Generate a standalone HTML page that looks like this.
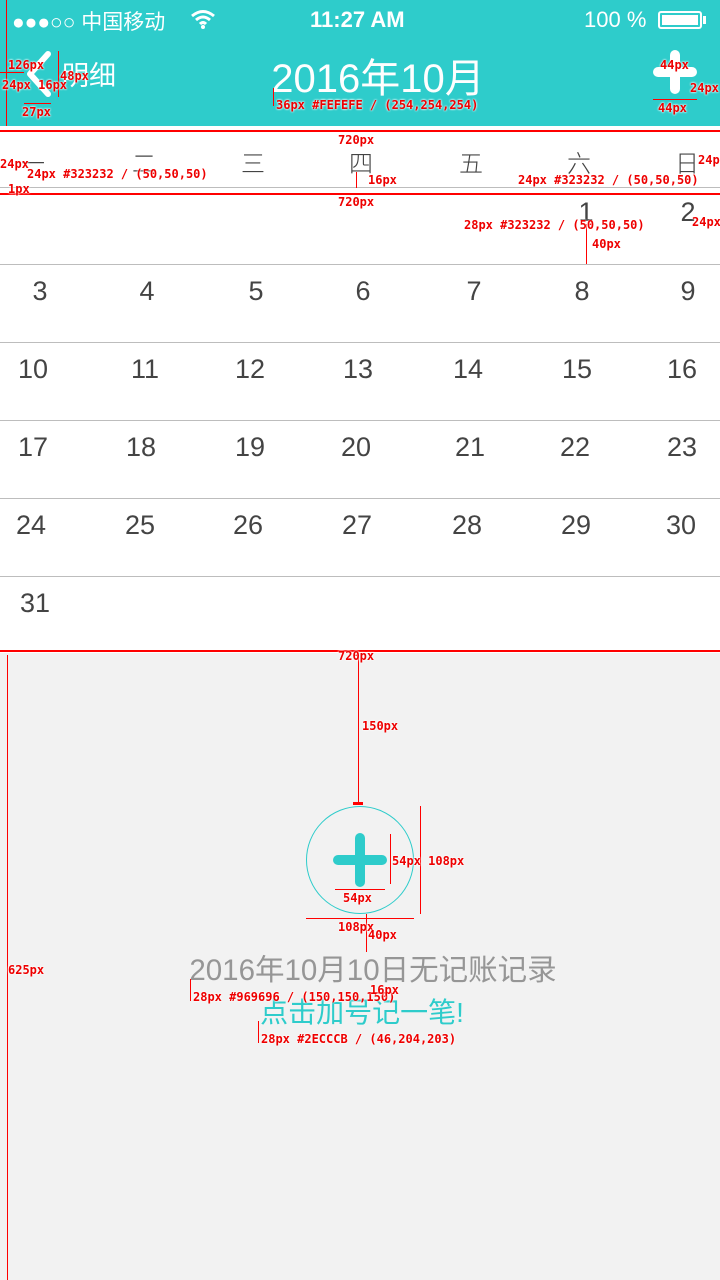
<!DOCTYPE html>
<html><head><meta charset="utf-8"><style>
*{margin:0;padding:0;box-sizing:border-box}
body{width:720px;height:1280px;position:relative;overflow:hidden;background:#fff;font-family:"Liberation Sans","Noto Sans CJK SC",sans-serif}
.a{position:absolute}
.hdr{left:0;top:0;width:720px;height:126px;background:#2ECCCB}
.wk{font-size:24px;color:#444;top:144px;width:40px;text-align:center;margin-left:-20px;font-weight:300}
.n{font-size:27px;color:#444;width:60px;text-align:center;margin-left:-30px}
.hl{height:1px;background:#bdbdbd;left:0;width:720px}
.r{background:#f00}
.t{color:#e00;font-family:"DejaVu Sans Mono","Liberation Mono",monospace;font-weight:bold;font-size:12px;white-space:nowrap;text-shadow:0 0 2px #fff,0 0 2px #fff}
</style></head><body>
<div class="a hdr"></div>
<div class="a" style="left:12px;top:6px;color:#fff;font-size:21px">●●●○○ 中国移动</div>
<svg class="a" style="left:190px;top:9px" width="26" height="20" viewBox="0 0 26 20"><path d="M2 7 Q13 -2 24 7 M6 11 Q13 5 20 11 M10 15 Q13 12 16 15" stroke="#fff" stroke-width="3" fill="none"/><circle cx="13" cy="18" r="2" fill="#fff"/></svg>
<div class="a" style="left:310px;top:7px;color:#fff;font-size:22px;font-weight:bold">11:27 AM</div>
<div class="a" style="left:584px;top:7px;color:#fff;font-size:22px">100 %</div>
<div class="a" style="left:658px;top:11px;width:44px;height:18px;border:2px solid #fff;border-radius:3px;padding:2px"><div style="background:#fff;width:100%;height:100%"></div></div>
<div class="a" style="left:703px;top:16px;width:3px;height:8px;background:#fff"></div>
<svg class="a" style="left:24px;top:50px" width="30" height="50"><path d="M24 4 L6 24 L24 44" stroke="#fff" stroke-width="6" fill="none" stroke-linecap="round" stroke-linejoin="round"/></svg>
<div class="a" style="left:62px;top:54px;color:#fff;font-size:27px">明细</div>
<div class="a" style="left:0;width:756px;top:46px;text-align:center;color:#FEFEFE;font-size:40px">2016年10月</div>
<div class="a" style="left:670px;top:50px;width:10px;height:44px;background:#fff;border-radius:5px"></div>
<div class="a" style="left:653px;top:67px;width:44px;height:10px;background:#fff;border-radius:5px"></div>

<div class="a wk" style="left:33px">一</div><div class="a wk" style="left:144px">二</div><div class="a wk" style="left:253px">三</div><div class="a wk" style="left:361px">四</div><div class="a wk" style="left:471px">五</div><div class="a wk" style="left:579px">六</div><div class="a wk" style="left:687px">日</div>
<div class="a hl" style="top:187px"></div>
<div class="a hl" style="top:264px"></div><div class="a hl" style="top:342px"></div><div class="a hl" style="top:420px"></div><div class="a hl" style="top:498px"></div><div class="a hl" style="top:576px"></div>

<div class="a n" style="left:586px;top:197px">1</div><div class="a n" style="left:688px;top:197px">2</div>
<div class="a n" style="left:40px;top:276px">3</div><div class="a n" style="left:147px;top:276px">4</div><div class="a n" style="left:256px;top:276px">5</div><div class="a n" style="left:363px;top:276px">6</div><div class="a n" style="left:474px;top:276px">7</div><div class="a n" style="left:582px;top:276px">8</div><div class="a n" style="left:688px;top:276px">9</div>
<div class="a n" style="left:33px;top:354px">10</div><div class="a n" style="left:145px;top:354px">11</div><div class="a n" style="left:250px;top:354px">12</div><div class="a n" style="left:358px;top:354px">13</div><div class="a n" style="left:468px;top:354px">14</div><div class="a n" style="left:577px;top:354px">15</div><div class="a n" style="left:682px;top:354px">16</div>
<div class="a n" style="left:33px;top:432px">17</div><div class="a n" style="left:141px;top:432px">18</div><div class="a n" style="left:250px;top:432px">19</div><div class="a n" style="left:356px;top:432px">20</div><div class="a n" style="left:470px;top:432px">21</div><div class="a n" style="left:575px;top:432px">22</div><div class="a n" style="left:682px;top:432px">23</div>
<div class="a n" style="left:31px;top:510px">24</div><div class="a n" style="left:140px;top:510px">25</div><div class="a n" style="left:248px;top:510px">26</div><div class="a n" style="left:357px;top:510px">27</div><div class="a n" style="left:467px;top:510px">28</div><div class="a n" style="left:576px;top:510px">29</div><div class="a n" style="left:681px;top:510px">30</div>
<div class="a n" style="left:35px;top:588px">31</div>

<div class="a" style="left:0;top:653px;width:720px;height:627px;background:#f2f2f2"></div>
<div class="a" style="left:306px;top:806px;width:108px;height:108px;border:1px solid #2ECCCB;border-radius:50%"></div>
<div class="a" style="left:355px;top:833px;width:10px;height:54px;background:#2ECCCB;border-radius:5px"></div>
<div class="a" style="left:333px;top:855px;width:54px;height:10px;background:#2ECCCB;border-radius:5px"></div>
<div class="a" style="left:0;width:746px;top:947px;text-align:center;color:#969696;font-size:29.5px">2016年10月10日无记账记录</div>
<div class="a" style="left:0;width:724px;top:991px;text-align:center;color:#2ECCCB;font-size:28px">点击加号记一笔!</div>

<!-- annotations -->
<div class="a r" style="left:0;top:130px;width:720px;height:2px"></div>
<div class="a r" style="left:0;top:193px;width:720px;height:2px"></div>
<div class="a r" style="left:0;top:650px;width:720px;height:2px"></div>
<div class="a r" style="left:6px;top:0;width:1px;height:126px"></div>
<div class="a r" style="left:7px;top:655px;width:1px;height:625px"></div>
<div class="a r" style="left:358px;top:655px;width:1px;height:150px"></div>
<div class="a r" style="left:353px;top:802px;width:10px;height:3px"></div>
<div class="a r" style="left:420px;top:806px;width:1px;height:108px"></div>
<div class="a r" style="left:306px;top:918px;width:108px;height:1px"></div>
<div class="a r" style="left:366px;top:914px;width:1px;height:38px"></div>
<div class="a r" style="left:390px;top:834px;width:1px;height:50px"></div>
<div class="a r" style="left:335px;top:889px;width:50px;height:1px"></div>
<div class="a r" style="left:586px;top:224px;width:1px;height:40px"></div>
<div class="a r" style="left:356px;top:172px;width:1px;height:16px"></div>
<div class="a r" style="left:273px;top:88px;width:1px;height:18px"></div>
<div class="a r" style="left:190px;top:979px;width:1px;height:22px"></div>
<div class="a r" style="left:258px;top:1021px;width:1px;height:22px"></div>
<div class="a r" style="left:653px;top:99px;width:44px;height:1px"></div>
<div class="a r" style="left:0;top:72px;width:24px;height:1px"></div>
<div class="a r" style="left:24px;top:103px;width:27px;height:1px"></div>
<div class="a r" style="left:58px;top:51px;width:1px;height:46px"></div>
<div class="a t" style="left:8px;top:58px">126px</div>
<div class="a t" style="left:2px;top:78px">24px 16px</div>
<div class="a t" style="left:60px;top:69px">48px</div>
<div class="a t" style="left:22px;top:105px">27px</div>
<div class="a t" style="left:276px;top:98px">36px #FEFEFE / (254,254,254)</div>
<div class="a t" style="left:660px;top:58px">44px</div>
<div class="a t" style="left:690px;top:81px">24px</div>
<div class="a t" style="left:658px;top:101px">44px</div>
<div class="a t" style="left:338px;top:133px">720px</div>
<div class="a t" style="left:0;top:157px">24px</div>
<div class="a t" style="left:27px;top:167px">24px #323232 / (50,50,50)</div>
<div class="a t" style="left:368px;top:173px">16px</div>
<div class="a t" style="left:518px;top:173px">24px #323232 / (50,50,50)</div>
<div class="a t" style="left:698px;top:153px">24px</div>
<div class="a t" style="left:8px;top:182px">1px</div>
<div class="a t" style="left:338px;top:195px">720px</div>
<div class="a t" style="left:464px;top:218px">28px #323232 / (50,50,50)</div>
<div class="a t" style="left:592px;top:237px">40px</div>
<div class="a t" style="left:692px;top:215px">24px</div>
<div class="a t" style="left:338px;top:649px">720px</div>
<div class="a t" style="left:362px;top:719px">150px</div>
<div class="a t" style="left:392px;top:854px">54px 108px</div>
<div class="a t" style="left:343px;top:891px">54px</div>
<div class="a t" style="left:338px;top:920px">108px</div>
<div class="a t" style="left:368px;top:928px">40px</div>
<div class="a t" style="left:8px;top:963px">625px</div>
<div class="a t" style="left:193px;top:990px">28px #969696 / (150,150,150)</div>
<div class="a t" style="left:370px;top:983px">16px</div>
<div class="a t" style="left:261px;top:1032px">28px #2ECCCB / (46,204,203)</div>
</body></html>
